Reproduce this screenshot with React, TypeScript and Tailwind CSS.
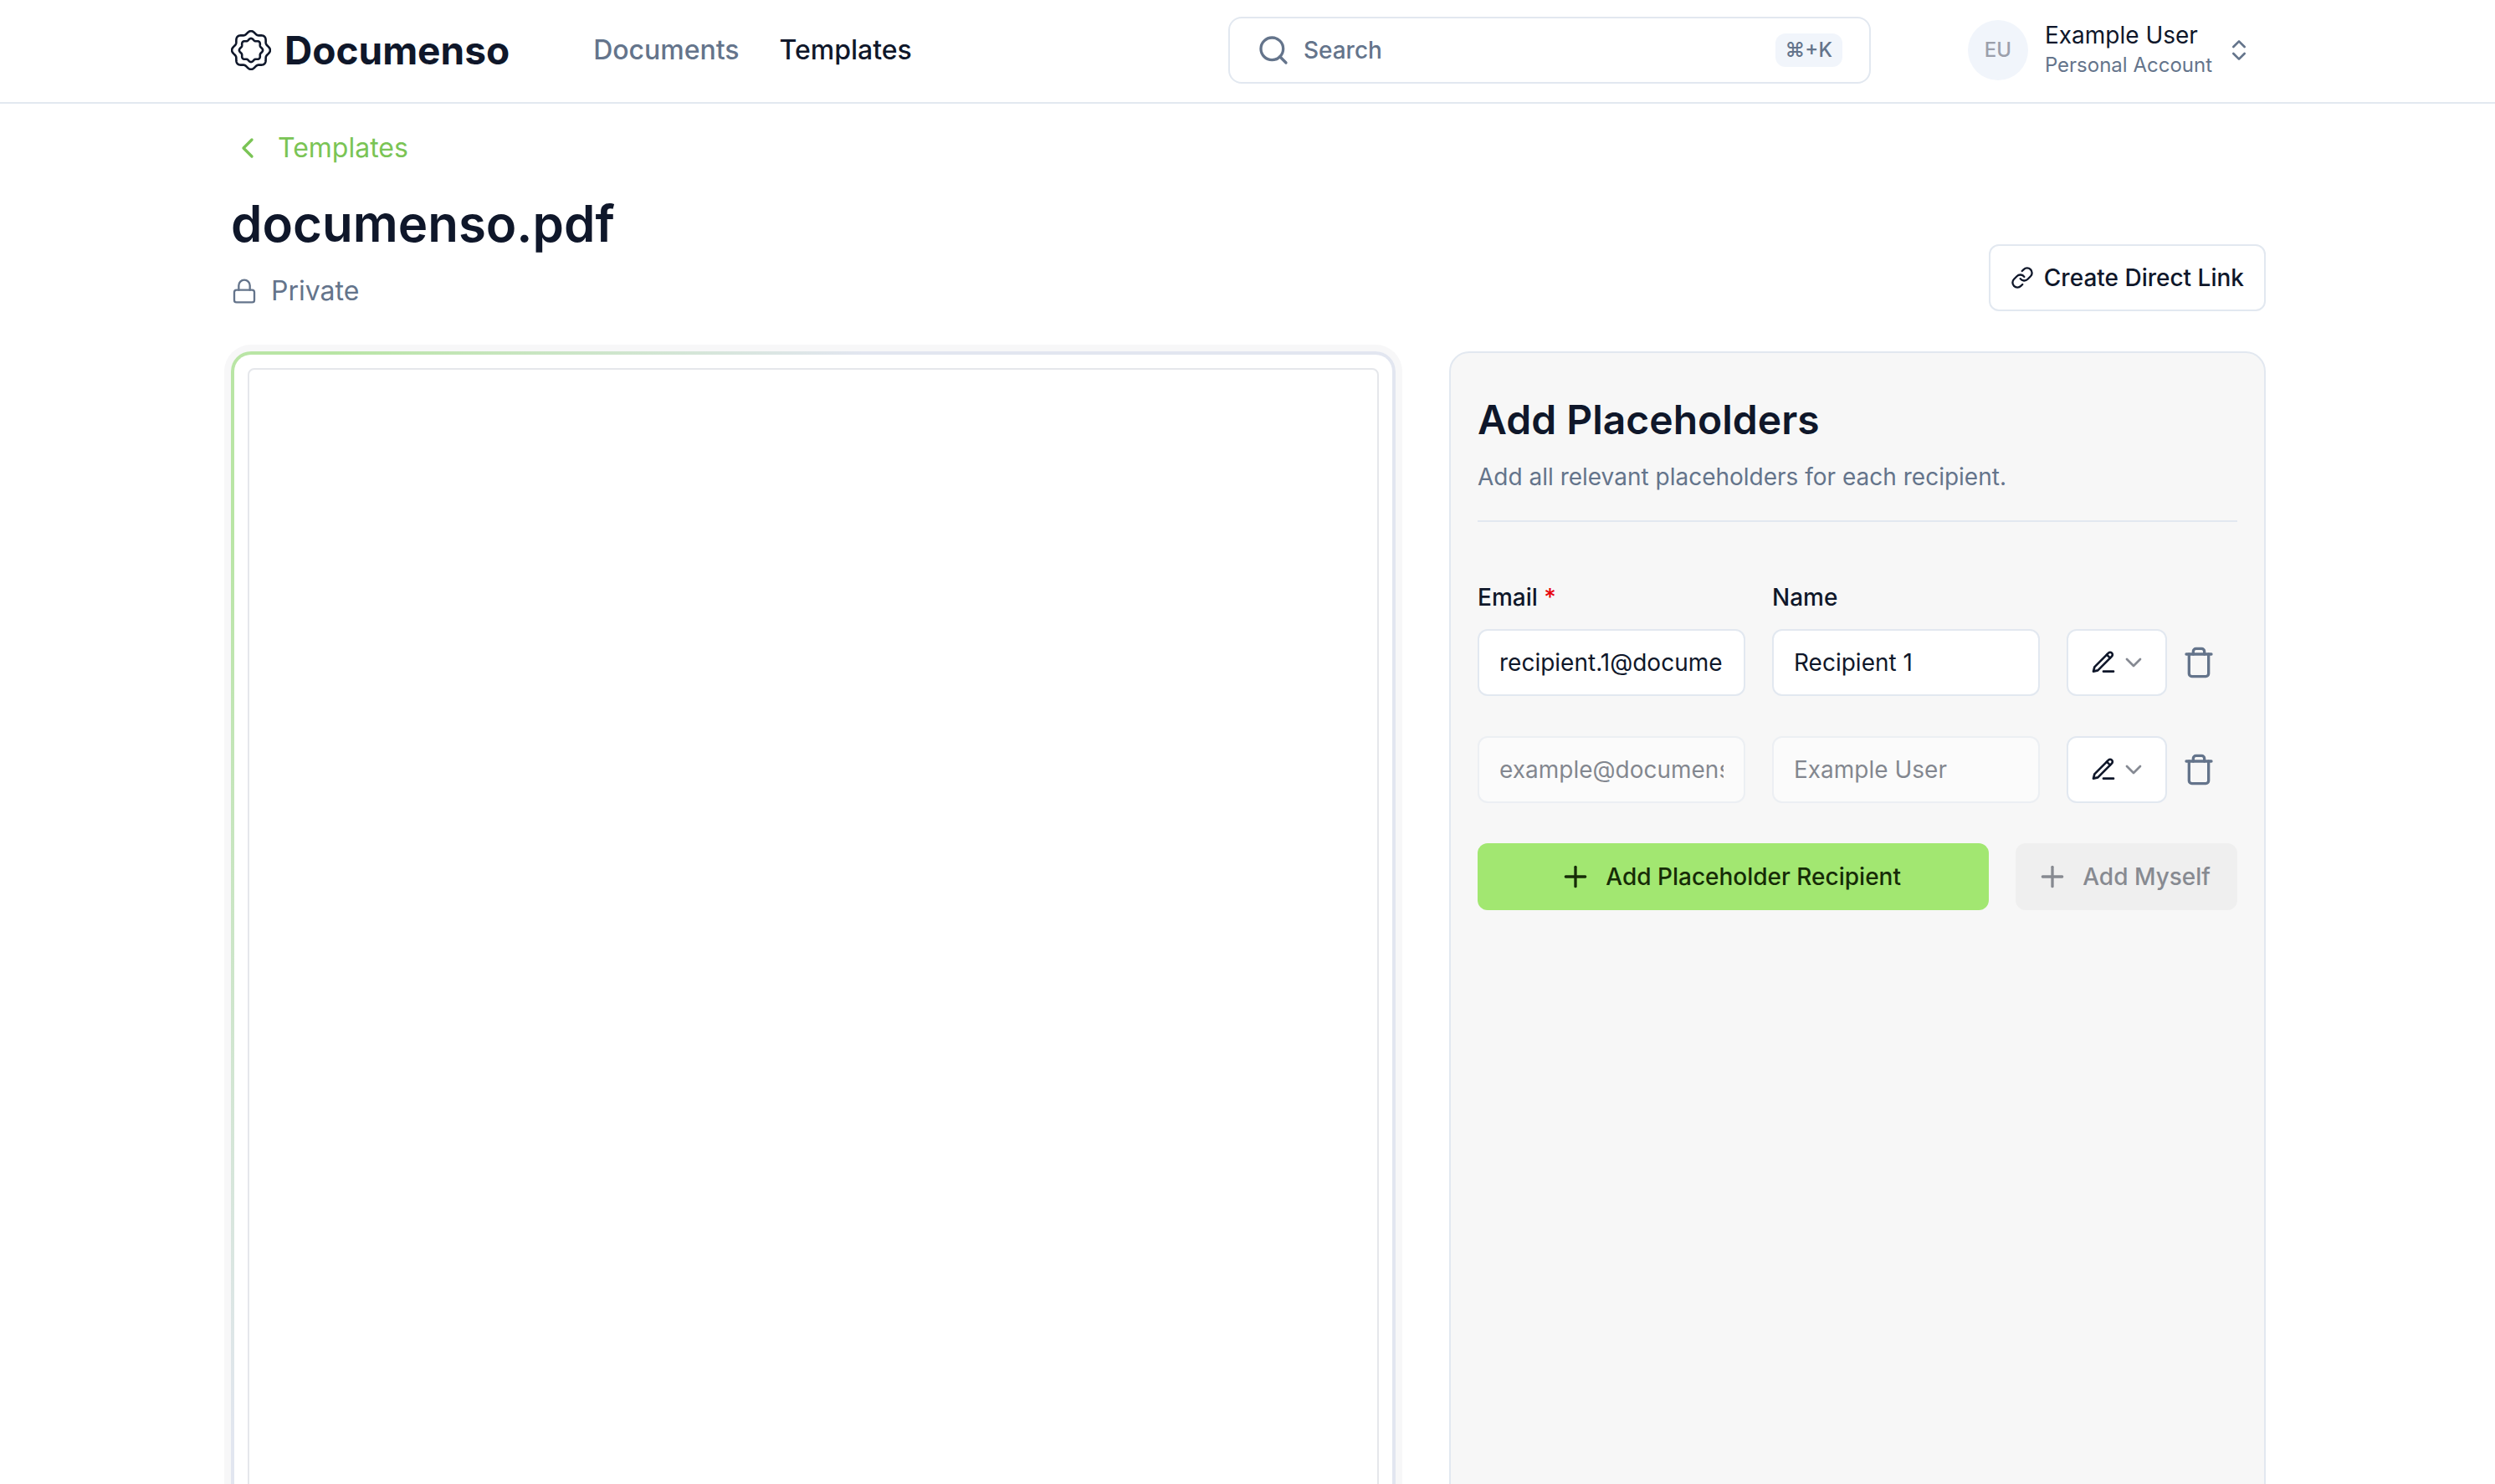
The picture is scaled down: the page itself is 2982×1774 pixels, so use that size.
import React from 'react';
import { ChevronDown, ChevronLeft, ChevronsUpDown, Link as LinkIcon, Lock, Plus, Search, Trash } from 'lucide-react';

function scallop(radius: number, depth: number): string {
  const steps = 160;
  const points: string[] = [];
  for (let i = 0; i < steps; i += 1) {
    const a = (i / steps) * Math.PI * 2;
    const r = radius + depth * Math.cos(8 * a);
    points.push(`${(24 + r * Math.sin(a)).toFixed(2)} ${(24 - r * Math.cos(a)).toFixed(2)}`);
  }
  return `M${points.join('L')}Z`;
}

function LogoMark() {
  return (
    <svg viewBox="0 0 48 48" className="size-12" fill="none" stroke="currentColor" strokeWidth="2.6" strokeLinejoin="round" aria-hidden="true">
      <path d={scallop(21.2, 1.7)} />
      <path d={scallop(13, 1.1)} />
    </svg>
  );
}

function PencilIcon() {
  return (
    <svg viewBox="0 0 24 24" className="size-8" fill="none" stroke="currentColor" strokeWidth="2" strokeLinecap="round" strokeLinejoin="round" aria-hidden="true">
      <path d="M12 20h9" />
      <path d="M16.5 3.5a2.12 2.12 0 0 1 3 3L7 19l-4 1 1-4Z" />
      <path d="m15 5 3 3" />
    </svg>
  );
}

function Header() {
  return (
    <header className="h-[124px] shrink-0 border-b-2 border-[#e2e8f0] pb-0.5">
      <div className="mx-auto flex h-full max-w-[2560px] items-center pr-[63px] pl-[65px]">
        <a href="#home" className="flex items-center gap-4 text-[46px] leading-none font-bold">
          <LogoMark />
          Documenso
        </a>
        <nav className="ml-[100px] flex gap-12 text-[32px] leading-[40px] font-medium">
          <a href="#documents" className="text-[#64748b]">Documents</a>
          <a href="#templates">Templates</a>
        </nav>
        <div className="ml-auto flex items-center">
          <button type="button" className="flex h-20 w-[768px] items-center rounded-2xl border-2 border-[#e2e8f0] px-8 text-[28px] font-medium text-[#64748b]">
            <Search className="mr-4 size-10" />
            Search
            <kbd className="ml-auto flex h-10 items-center rounded-xl bg-[#f1f5fb] px-3 font-[Inter] text-[24px] font-medium">⌘+K</kbd>
          </button>
          <button type="button" className="ml-[116px] flex items-center pr-4 text-left">
            <span className="flex size-[72px] items-center justify-center rounded-full bg-[#f1f5fb] text-[24px] font-medium text-[#9b9fab]">EU</span>
            <span className="ml-5 flex flex-col">
              <span className="text-[28px] leading-[36px]">Example User</span>
              <span className="text-[24px] leading-[36px] text-[#64748b]">Personal Account</span>
            </span>
            <ChevronsUpDown className="ml-4 size-8 text-[#64748b]" />
          </button>
        </div>
      </div>
    </header>
  );
}

const inputClass =
  'h-20 w-full min-w-0 rounded-xl border-2 border-[#e2e8f0] bg-white px-6 text-[28px] disabled:opacity-50';

type Recipient = { id: string; email: string; name: string; disabled: boolean };

const recipients: Recipient[] = [
  { id: 'r1', email: 'recipient.1@documenso.com', name: 'Recipient 1', disabled: false },
  { id: 'r2', email: 'example@documenso.com', name: 'Example User', disabled: true },
];

function RecipientRow({ recipient }: { recipient: Recipient }) {
  const { id, email, name, disabled } = recipient;
  return (
    <div className="flex gap-8">
      <input id={`${id}-email`} aria-label="Email" type="email" defaultValue={email} disabled={disabled} className={`${inputClass} flex-1`} />
      <input id={`${id}-name`} aria-label="Name" type="text" defaultValue={name} disabled={disabled} className={`${inputClass} flex-1`} />
      <div className="flex w-[204px] shrink-0 items-center">
        <div className="relative flex h-20 w-[120px] items-center justify-center gap-1 rounded-xl border-2 border-[#e2e8f0] bg-white pl-1">
          <PencilIcon />
          <ChevronDown className="size-8 opacity-50" />
          <select aria-label="Role" className="absolute inset-0 opacity-0">
            <option>Signer</option>
            <option>Viewer</option>
            <option>Approver</option>
          </select>
        </div>
        <button type="button" aria-label="Remove recipient" className="flex h-20 w-[76px] items-center justify-center text-[#64748b]">
          <Trash className="size-10" />
        </button>
      </div>
    </div>
  );
}

function PlaceholderPanel() {
  return (
    <form className="col-span-5 h-[1900px] rounded-3xl border-2 border-[#e2e8f0] bg-[#f7f7f7] px-8 pt-12">
      <h3 className="text-[48px] leading-[64px] font-semibold">Add Placeholders</h3>
      <p className="mt-4 text-[28px] leading-[40px] text-[#64748b]">Add all relevant placeholders for each recipient.</p>
      <hr className="mt-8 border-t-2 border-[#e2e8f0]" />
      <div className="mt-[76px] flex gap-8 text-[28px] leading-[28px] font-medium">
        <label htmlFor="r1-email" className="flex-1">
          Email <span className="text-red-600">*</span>
        </label>
        <label htmlFor="r1-name" className="flex-1">Name</label>
        <div className="w-[204px] shrink-0" />
      </div>
      <div className="mt-6 flex flex-col gap-12">
        {recipients.map((r) => (
          <RecipientRow key={r.id} recipient={r} />
        ))}
        <div className="flex gap-8 text-[28px] font-medium">
          <button type="button" className="flex h-20 flex-1 items-center justify-center rounded-xl bg-[#a2e771] text-[#162c07]">
            <Plus className="mr-4 -ml-2 size-10" />
            Add Placeholder Recipient
          </button>
          <button type="button" disabled className="flex h-20 items-center justify-center rounded-xl bg-[#efefef] px-8 text-[#878a91]">
            <Plus className="mr-4 -ml-2 size-10" />
            Add Myself
          </button>
        </div>
      </div>
    </form>
  );
}

export default function App() {
  return (
    <div className="flex h-screen flex-col overflow-hidden bg-white font-[Inter,sans-serif] text-[#0f172a]">
      <Header />
      <main className="mx-auto w-full max-w-[2560px] pt-8 pr-[63px] pl-[65px]">
        <a href="#templates" className="flex w-fit items-center text-[32px] leading-[42px] text-[#7ac455]">
          <ChevronLeft className="mr-4 size-10" />
          Templates
        </a>
        <div className="flex items-end justify-between">
          <div>
            <h1 className="mt-8 text-[60px] leading-[74px] font-semibold">documenso.pdf</h1>
            <div className="mt-5 flex items-center gap-4 text-[32px] leading-[48px] text-[#64748b]">
              <Lock className="size-8" strokeWidth={1.75} />
              Private
            </div>
          </div>
          <button type="button" className="flex h-20 items-center gap-3 rounded-xl border-2 border-[#e2e8f0] px-6 text-[28px] font-medium">
            <LinkIcon className="size-7" />
            Create Direct Link
          </button>
        </div>
        <div className="mt-12 grid grid-cols-12 gap-16">
          <section
            aria-label="Document preview"
            className="col-span-7 h-[1950px] rounded-3xl bg-[linear-gradient(120deg,#b9e5a5_5%,#e2e6f0_30%)] p-1 ring-8 ring-[#f7f7f8]"
          >
            <div className="h-full rounded-[20px] bg-white p-4">
              <div className="h-full rounded-lg border-2 border-[#e5e7eb]" />
            </div>
          </section>
          <PlaceholderPanel />
        </div>
      </main>
    </div>
  );
}
